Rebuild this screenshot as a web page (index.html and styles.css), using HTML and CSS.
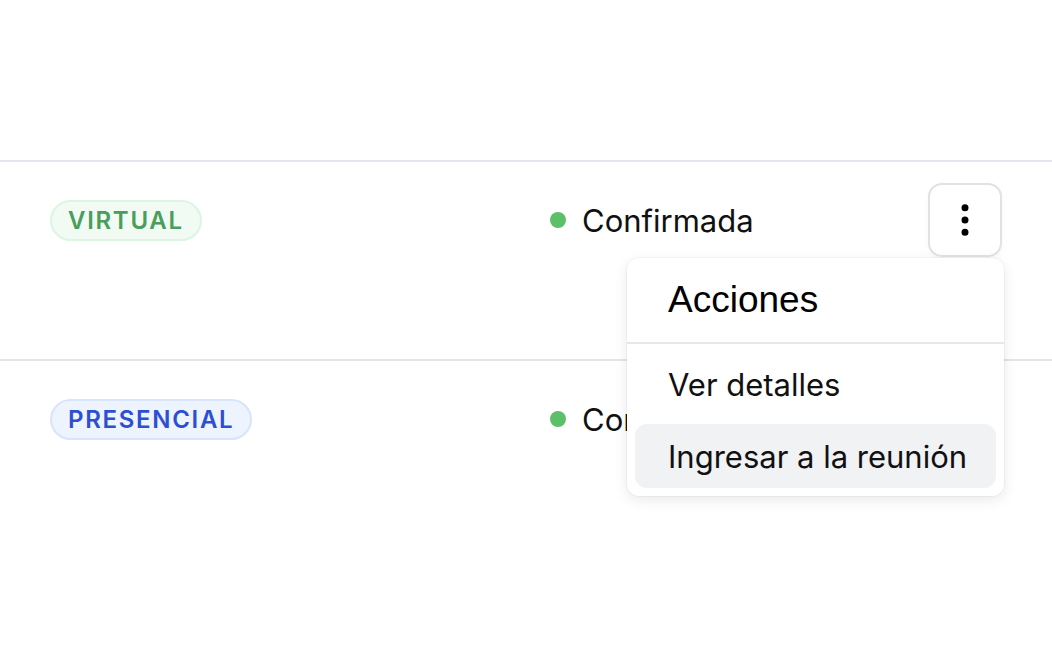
FILE: index.html
```html
<!doctype html>
<html>
<head>
<meta charset="utf-8">
<title>Reuniones</title>
<link rel="stylesheet" href="styles.css">
</head>
<body>
<div class="table">
	<div class="head"></div>
	<div class="row">
		<div class="cell type"><span class="badge virtual">VIRTUAL</span></div>
		<div class="cell status"><span class="dot"></span>Confirmada</div>
		<div class="cell actions">
			<button class="kebab">
				<svg width="42" height="42" viewBox="0 0 24 24" fill="none" stroke="#000" stroke-width="2" stroke-linecap="round" stroke-linejoin="round"><circle cx="12" cy="5" r="1"/><circle cx="12" cy="12" r="1"/><circle cx="12" cy="19" r="1"/></svg>
			</button>
			<div class="menu">
				<div class="menu-title">Acciones</div>
				<div class="menu-sep"></div>
				<ul class="menu-list">
					<li>Ver detalles</li>
					<li class="active">Ingresar a la reunión</li>
				</ul>
			</div>
		</div>
	</div>
	<div class="row">
		<div class="cell type"><span class="badge presencial">PRESENCIAL</span></div>
		<div class="cell status"><span class="dot"></span>Confirmada</div>
		<div class="cell actions">
			<button class="kebab">
				<svg width="42" height="42" viewBox="0 0 24 24" fill="none" stroke="#000" stroke-width="2" stroke-linecap="round" stroke-linejoin="round"><circle cx="12" cy="5" r="1"/><circle cx="12" cy="12" r="1"/><circle cx="12" cy="19" r="1"/></svg>
			</button>
		</div>
	</div>
</div>
</body>
</html>
```

FILE: styles.css
```css
*{ margin:0; padding:0; box-sizing:border-box; list-style:none;}
body{ background:#fff; color:#111; font-family:Inter, "Noto Sans", sans-serif;}
.head{ height:160px;}
.row{ height:199px; border-top:2px solid #e4e6ef; padding:21px 50px 0; display:grid; grid-template-columns:500px 1fr 74px; align-items:start;}
.row + .row{ border-top-color:#e2e5e9;}
.cell{ height:74px; display:flex; align-items:center; white-space:nowrap;}
.badge{ display:inline-flex; align-items:center; height:41px; padding:0 16px; border:2px solid; border-radius:21px; font-size:24px; font-weight:600; letter-spacing:1.7px;}
.virtual{ color:#4a9d5b; background:#f1fbf3; border-color:#dcf5e2;}
.presencial{ color:#2d4fd2; background:#eef4fe; border-color:#d8e4fb;}
.status{ font-size:31px; font-weight:400;}
.dot{ width:16px; height:16px; border-radius:50%; background:#5cbf6a; margin-right:16px;}
.actions{ position:relative; justify-content:flex-end;}
.kebab{ width:74px; height:74px; border:2px solid #e2e2e2; border-radius:14px; background:#fff; display:flex; align-items:center; justify-content:center; box-shadow:0 2px 4px rgba(0,0,0,0.04);}
.menu{ position:absolute; top:75px; right:-2px; width:377px; background:#fff; border-radius:12px; box-shadow:0 4px 14px rgba(0,0,0,0.09), 0 0 0 1px rgba(0,0,0,0.03); z-index:10;}
.menu-title{ height:84px; padding:0 41px; display:flex; align-items:center; font-family:"Liberation Sans", Arial, sans-serif; font-size:37px; color:#000;}
.menu-sep{ height:2px; background:#e6e6ec;}
.menu-list{ padding:8px; display:flex; flex-direction:column; gap:8px;}
.menu-list li{ height:64px; padding:0 0 0 33px; display:flex; align-items:center; border-radius:12px; font-size:31px; color:#111; white-space:nowrap;}
.menu-list li.active{ background:#f1f2f4;}
```
